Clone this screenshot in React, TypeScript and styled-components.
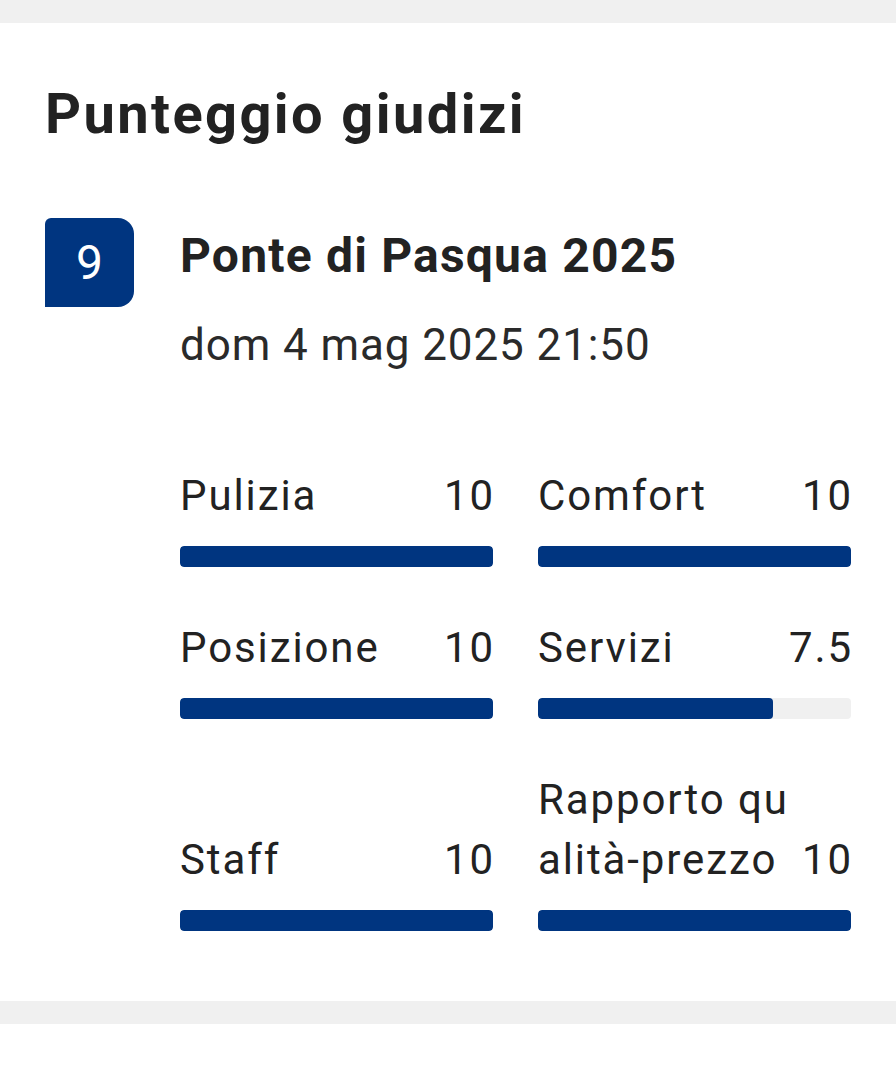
import styled, { createGlobalStyle } from "styled-components";

interface IRating {
  label: string;
  score: number;
}

const ratings: IRating[] = [
  { label: "Pulizia", score: 10 },
  { label: "Comfort", score: 10 },
  { label: "Posizione", score: 10 },
  { label: "Servizi", score: 7.5 },
  { label: "Staff", score: 10 },
  { label: "Rapporto qualità-prezzo", score: 10 },
];

const GlobalStyle = createGlobalStyle`
  body {
    margin: 0;
    background: #ffffff;
    font-family: Roboto, "Liberation Sans", sans-serif;
    color: #222222;
  }
`;

const Band = styled.div`
  height: 23px;
  background-color: #f0f0f0;
`;

const Card = styled.section`
  padding: 57px 45px 70px 45px;
  background-color: #ffffff;
`;

const Title = styled.h2`
  margin: 0;
  font-size: 56px;
  line-height: 68px;
  font-weight: 700;
  letter-spacing: 2.4px;
  color: #222222;
`;

const Review = styled.div`
  display: flex;
  gap: 46px;
  margin-top: 70px;
`;

const Badge = styled.div`
  flex: 0 0 89px;
  height: 89px;
  display: flex;
  align-items: center;
  justify-content: center;
  background-color: #003580;
  color: #ffffff;
  font-size: 48px;
  border-radius: 6px 16px 16px 0;
`;

const Body = styled.div`
  flex: 1;
  min-width: 0;
`;

const ReviewTitle = styled.div`
  font-size: 48px;
  line-height: 76px;
  font-weight: 700;
  letter-spacing: 1.2px;
`;

const Date = styled.div`
  margin-top: 21px;
  font-size: 44px;
  line-height: 60px;
  letter-spacing: 0.9px;
  color: #2a2a2a;
`;

const Grid = styled.div`
  display: grid;
  grid-template-columns: 1fr 1fr;
  column-gap: 45px;
  row-gap: 51px;
  align-items: end;
  margin-top: 91px;
`;

const Item = styled.div`
  display: flex;
  flex-direction: column;
`;

const Head = styled.div`
  display: flex;
  align-items: flex-end;
  justify-content: space-between;
  font-size: 42px;
  line-height: 60px;
  letter-spacing: 1.9px;
  color: #222222;
`;

const Label = styled.span`
  flex: 1;
  min-width: 0;
  word-break: break-all;
`;

const Value = styled.span`
  flex: none;
  padding-left: 8px;
  margin-right: -2px;
`;

const Track = styled.div`
  margin-top: 20px;
  height: 21px;
  border-radius: 4px;
  background-color: #f0f0f0;
  overflow: hidden;
`;

const Fill = styled.div`
  height: 100%;
  border-radius: 4px;
  background-color: #003580;
`;

function App() {
  return (
    <>
      <GlobalStyle />
      <Band />
      <Card>
        <Title>Punteggio giudizi</Title>
        <Review>
          <Badge>9</Badge>
          <Body>
            <ReviewTitle>Ponte di Pasqua 2025</ReviewTitle>
            <Date>dom 4 mag 2025 21:50</Date>
            <Grid>
              {ratings.map((r) => (
                <Item key={r.label}>
                  <Head>
                    <Label>{r.label}</Label>
                    <Value>{r.score}</Value>
                  </Head>
                  <Track>
                    <Fill style={{ width: `${r.score * 10}%` }} />
                  </Track>
                </Item>
              ))}
            </Grid>
          </Body>
        </Review>
      </Card>
      <Band />
    </>
  );
}

export default App;
